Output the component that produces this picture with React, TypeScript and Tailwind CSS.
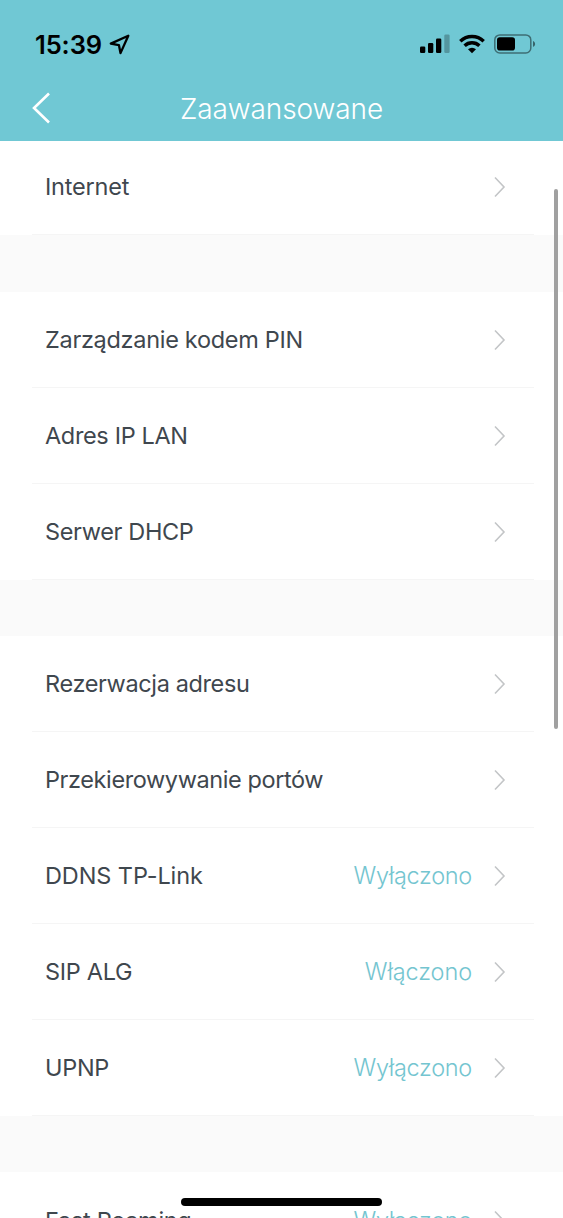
import clsx from 'clsx'

type Setting = {
    label: string
    value?: string
    tracking?: string
    valueTracking?: string
}

// Settings are grouped, each group is separated by a grey band
const GROUPS: Setting[][] = [
    [{ label: 'Internet', tracking: 'tracking-[-0.2px]' }],
    [
        { label: 'Zarządzanie kodem PIN', tracking: 'tracking-[-0.3px]' },
        { label: 'Adres IP LAN', tracking: 'tracking-[-0.35px]' },
        { label: 'Serwer DHCP', tracking: 'tracking-[-0.35px]' },
    ],
    [
        { label: 'Rezerwacja adresu', tracking: 'tracking-[-0.38px]' },
        { label: 'Przekierowywanie portów', tracking: 'tracking-[-0.4px]' },
        { label: 'DDNS TP-Link', value: 'Wyłączono', tracking: 'tracking-[-0.1px]' },
        { label: 'SIP ALG', value: 'Włączono', valueTracking: 'tracking-[-0.1px]' },
        { label: 'UPNP', value: 'Wyłączono' },
    ],
    [{ label: 'Fast Roaming', value: 'Wyłączono' }],
]

function StatusBar() {
    return (
        <div className="flex h-[75px] items-center justify-between pt-[13px] pr-[27px] pl-[35px]">
            <div className="flex items-center gap-[7px]">
                <span className="pt-px text-[25.5px] leading-none font-semibold tracking-[-0.1px]">15:39</span>
                <svg width="21" height="21" viewBox="0 0 21 21" fill="none" stroke="currentColor" strokeWidth="2.3" strokeLinejoin="round">
                    <path d="M19.3 1.7 1.8 9.6l8.1 1.5 1.6 8z" />
                </svg>
            </div>
            <div className="flex items-center">
                <svg width="30" height="20" viewBox="0 0 30 20" fill="currentColor">
                    <rect x="0" y="12.5" width="5.3" height="6.5" rx="1.3" />
                    <rect x="8" y="9" width="5.3" height="10" rx="1.3" />
                    <rect x="16" y="4.5" width="5.3" height="14.5" rx="1.3" />
                    <rect x="24.3" y="0.5" width="5.3" height="18.5" rx="1.3" opacity="0.25" />
                </svg>
                <svg className="ml-[9px]" width="26" height="20" viewBox="0 0 26 20" fill="none" stroke="currentColor" strokeWidth="3.4">
                    <path d="M1.3 7.2a16.8 16.8 0 0 1 23.4 0" />
                    <path d="M5.6 11.8a10.6 10.6 0 0 1 14.8 0" />
                    <path d="M13 19.2 9 15.3a5.9 5.9 0 0 1 8 0z" fill="currentColor" stroke="none" />
                </svg>
                <svg className="ml-[9px]" width="42" height="20" viewBox="0 0 42 20">
                    <rect x="0.8" y="0.9" width="36" height="18" rx="5" fill="none" stroke="currentColor" strokeWidth="1.5" opacity="0.45" />
                    <rect x="3" y="3.2" width="18" height="13.4" rx="2.8" fill="currentColor" />
                    <path d="M39 7v5.8c1.3-.6 2.1-1.6 2.1-2.9S40.3 7.6 39 7z" fill="currentColor" opacity="0.5" />
                </svg>
            </div>
        </div>
    )
}

function Header() {
    return (
        <header className="relative z-10 h-[141px] shrink-0 bg-[#70c8d4] text-black">
            <StatusBar />
            <div className="grid h-[66px] grid-cols-[60px_1fr_60px] items-center">
                <button type="button" aria-label="Wstecz" className="pl-8 text-white">
                    <svg width="19" height="32" viewBox="0 0 19 32" fill="none" stroke="currentColor" strokeWidth="2.6">
                        <path d="M17 1.5 2 16l15 14.5" />
                    </svg>
                </button>
                <h1 className="pt-px text-center text-[28px] leading-none font-light tracking-[-0.1px] text-white">Zaawansowane</h1>
            </div>
        </header>
    )
}

function SettingRow({ label, value, tracking = 'tracking-[-0.3px]', valueTracking = 'tracking-[-0.3px]' }: Setting) {
    return (
        <li className="mr-[29px] ml-8 flex h-24 items-center border-b border-[#f5f5f5] pr-[28px] pl-[13px]">
            <span className={clsx('flex-1 pt-px text-[23.5px] font-[370] text-[#3f474e]', tracking)}>{label}</span>
            {value && <span className={clsx('mr-[21px] pt-px text-[23.5px] font-light text-[#74c5d0]', valueTracking)}>{value}</span>}
            <svg width="13" height="22" viewBox="0 0 13 22" fill="none" stroke="#c3c5c7" strokeWidth="1.6">
                <path d="m2 1.5 9 9.5-9 9.5" />
            </svg>
        </li>
    )
}

export default function App() {
    return (
        <div className="relative flex h-[1218px] w-[563px] flex-col overflow-hidden bg-[#fafafa] font-['Inter','Liberation_Sans',sans-serif]">
            <Header />
            <main className="-mt-0.5 flex flex-col gap-14">
                {GROUPS.map((group) => (
                    <ul key={group[0].label} className="bg-white first:mb-px last:pt-px">
                        {group.map((setting) => (
                            <SettingRow key={setting.label} {...setting} />
                        ))}
                    </ul>
                ))}
            </main>

            {/* Scroll indicator */}
            <div className="absolute top-[189px] right-[5px] h-[540px] w-[4px] rounded-full bg-[#a0a0a0]" />

            {/* Home indicator */}
            <div className="absolute top-[1198px] left-[181px] h-2 w-[201px] rounded-full bg-black" />
        </div>
    )
}
